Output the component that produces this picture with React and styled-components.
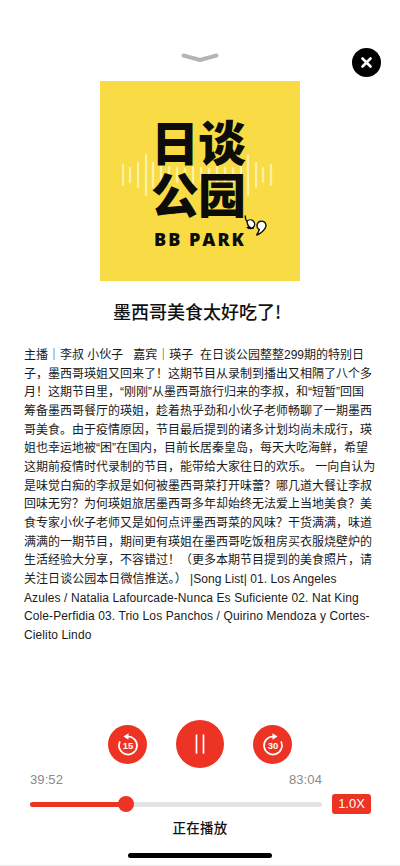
import React from "react";
import styled, { createGlobalStyle } from "styled-components";

const Global = createGlobalStyle`
  html, body { margin: 0; padding: 0; background: #fff; }
  body { font-family: "Liberation Sans", "Noto Sans CJK SC", sans-serif; }
`;

const Page = styled.div`
  width: 400px; height: 866px; display: flex; flex-direction: column; align-items: center;
  overflow: hidden; background: #fff; box-sizing: border-box; border-bottom: 1px solid #ececec;
`;
const Header = styled.header`
  width: 100%; height: 81px; display: grid; grid-template-columns: 1fr auto 1fr; box-sizing: border-box; padding: 0 19px;
`;
const Chevron = styled.svg`
  grid-column: 2; width: 38px; height: 12px; margin-top: 52px; display: block;
`;
const CloseButton = styled.button`
  grid-column: 3; justify-self: end; width: 29px; height: 29px; margin-top: 48px; border: 0; padding: 0; border-radius: 50%;
  background: #000; display: flex; align-items: center; justify-content: center;
`;
const Cover = styled.div`
  position: relative; width: 200px; height: 200px; flex: none; background: #f9dc45; display: flex; flex-direction: column; align-items: center;
`;
const Wave = styled.svg`
  position: absolute; left: 22px; top: 71px; width: 152px; height: 46px;
`;
const LogoMark = styled.div`
  position: relative; margin-top: 33px; font-family: "Noto Sans CJK SC", sans-serif; font-weight: 900; font-size: 48px; line-height: 52px; height: 104px;
  letter-spacing: -1px; color: #0c0c0a; white-space: pre-line; transform: translateX(-2px);
`;
const BrandRow = styled.div`
  position: relative; margin-top: 12px;
`;
const Brand = styled.div`
  font-family: "Open Sans", sans-serif; font-weight: 800; font-size: 18px; line-height: 18px; letter-spacing: 2px; color: #0c0c0a;
`;
const BpMark = styled.svg`
  position: absolute; left: 90px; top: -15px; width: 24px; height: 22px;
`;
const Title = styled.h1`
  margin: 18px 6px 0 0; font-family: "Noto Sans CJK SC", sans-serif; font-size: 18px; line-height: 24px; font-weight: 500; color: #111;
`;
const Description = styled.div`
  width: 352px; margin-top: 23px; font-size: 12px; line-height: 18.67px; color: #1a1a1a; white-space: pre;
  font-family: "Liberation Sans", "Noto Sans CJK SC", sans-serif;
`;
const Line = styled.div`
  height: 18.67px; letter-spacing: ${p => p.$tracking}px;
`;
const Player = styled.section`
  margin-top: auto; width: 100%; display: flex; flex-direction: column; align-items: center;
`;
const Controls = styled.div`
  display: flex; align-items: center; gap: 29px;
`;
const RoundButton = styled.button`
  width: ${p => p.$size}px; height: ${p => p.$size}px; border-radius: 50%; border: 0; padding: 0; background: #ec3324;
  display: flex; align-items: center; justify-content: center;
`;
const SkipIcon = styled.svg`
  width: 30px; height: 30px; display: block;
`;
const SkipLabel = styled.text`
  font-family: "Liberation Sans", sans-serif; font-weight: 700; font-size: 9.5px; fill: #fff; text-anchor: middle;
`;
const Times = styled.div`
  width: 292px; margin: 4px 48px 0 0; display: flex; justify-content: space-between; font-size: 13px; line-height: 16px; color: #8a8a8a; letter-spacing: 0.1px;
`;
const SliderRow = styled.div`
  width: 341px; margin: 6px 0 0 1px; display: flex; align-items: center; justify-content: space-between;
`;
const Track = styled.div`
  position: relative; width: 292px; height: 5px; border-radius: 3px; background: #e3e3e5;
`;
const Fill = styled.div`
  height: 100%; border-radius: 3px; background: #ec3324;
`;
const Thumb = styled.div`
  position: absolute; top: 50%; width: 16px; height: 16px; border-radius: 50%; background: #ec3324; transform: translate(-50%, -50%);
`;
const Speed = styled.div`
  width: 39px; height: 20px; border-radius: 3px; background: #ec3324; color: #fff; font-size: 13px; line-height: 20px; text-align: center;
`;
const Status = styled.div`
  margin-top: 3px; font-family: "Noto Sans CJK SC", sans-serif; font-size: 13.5px; line-height: 20px; font-weight: 500; color: #111; letter-spacing: 0.3px;
`;
const HomeBar = styled.div`
  width: 144px; height: 5px; border-radius: 3px; background: #000; margin: 16px 0 7px;
`;

const lines = [
  "主播｜李叔 小伙子   嘉宾｜瑛子  在日谈公园整整299期的特别日",
  "子，墨西哥瑛姐又回来了！这期节目从录制到播出又相隔了八个多",
  "月！这期节目里，“刚刚”从墨西哥旅行归来的李叔，和“短暂”回国",
  "筹备墨西哥餐厅的瑛姐，趁着热乎劲和小伙子老师畅聊了一期墨西",
  "哥美食。由于疫情原因，节目最后提到的诸多计划均尚未成行，瑛",
  "姐也幸运地被“困”在国内，目前长居秦皇岛，每天大吃海鲜，希望",
  "这期前疫情时代录制的节目，能带给大家往日的欢乐。 一向自认为",
  "是味觉白痴的李叔是如何被墨西哥菜打开味蕾？哪几道大餐让李叔",
  "回味无穷？为何瑛姐旅居墨西哥多年却始终无法爱上当地美食？美",
  "食专家小伙子老师又是如何点评墨西哥菜的风味？干货满满，味道",
  "满满的一期节目，期间更有瑛姐在墨西哥吃饭租房买衣服烧壁炉的",
  "生活经验大分享，不容错过！（更多本期节目提到的美食照片，请",
  "关注日谈公园本日微信推送。） |Song List| 01. Los Angeles",
  "Azules / Natalia Lafourcade-Nunca Es Suficiente 02. Nat King",
  "Cole-Perfidia 03. Trio Los Panchos / Quirino Mendoza y Cortes-",
  "Cielito Lindo",
];

const trackingFor = i => (i < 12 ? 0 : i === 12 ? 0.05 : 0.11);

const bars = [[1,10],[8,7],[16,12],[24,20],[31,12],[39,10],[47,8],[55,7],[63,6],[71,8],[79,7],[87,6],[95,8],[103,7],[111,7],[119,9],[126,20],[134,12],[141,7],[149,10]];

const Skip = ({ label, forward }) => (
  <RoundButton $size={39} aria-label={label}>
    <SkipIcon viewBox="0 0 30 30">
      <g transform={forward ? "matrix(-1 0 0 1 30 0)" : undefined}>
        <path d="M15 7.5a9 9 0 1 1-8.3 5.5" fill="none" stroke="#fff" strokeWidth="1.7" strokeLinecap="round" />
        <path d="M15.5 4.2v6.6l-5-3.3z" fill="#fff" />
      </g>
      <SkipLabel x="15" y="20">{label}</SkipLabel>
    </SkipIcon>
  </RoundButton>
);

export default function App() {
  const progress = 32.9;
  return (
    <Page>
      <Global />
      <Header>
        <Chevron viewBox="0 0 38 12">
          <path d="M2.5 3.5 L19 8 L35.5 3.5" fill="none" stroke="#b4b4b8" strokeWidth="4" strokeLinecap="round" strokeLinejoin="round" />
        </Chevron>
        <CloseButton aria-label="close">
          <svg width="11" height="11" viewBox="0 0 11 11">
            <path d="M1.5 1.5l8 8M9.5 1.5l-8 8" stroke="#fff" strokeWidth="2.6" strokeLinecap="round" />
          </svg>
        </CloseButton>
      </Header>
      <Cover>
        <Wave viewBox="0 0 152 46">
          {bars.map(([x, h], i) => (
            <line key={i} x1={x} x2={x} y1={23 - h} y2={23 + h} stroke="#fdf0a8" strokeWidth="2.2" strokeLinecap="round" />
          ))}
        </Wave>
        <LogoMark>{"日谈\n公园"}</LogoMark>
        <BrandRow>
          <Brand>BB PARK</Brand>
          <BpMark viewBox="0 0 24 22">
            <path d="M1.2 1C1.2 3.5 1.6 5 3 6.2a4.4 4.4 0 1 1 .2 6.3c2.2.6 4 .7 6 .7a6 6 0 0 1-6-6C2 5.5 1.2 3.5 1.2 1z" fill="#fff" stroke="#0c0c0a" strokeWidth="1.4" strokeLinejoin="round" />
            <path d="M15.4 14.6c-.8 2-1.6 3.8-2.7 5.4 2.7-1 6.6-3.8 8.3-6.6a4.5 4.5 0 1 0-5.6 1.2z" fill="#fff" stroke="#0c0c0a" strokeWidth="1.4" strokeLinejoin="round" />
          </BpMark>
        </BrandRow>
      </Cover>
      <Title>墨西哥美食太好吃了!</Title>
      <Description>
        {lines.map((l, i) => <Line key={i} $tracking={trackingFor(i)}>{l}</Line>)}
      </Description>
      <Player>
        <Controls>
          <Skip label="15" />
          <RoundButton $size={48} aria-label="pause">
            <svg width="12" height="20" viewBox="0 0 12 20">
              <path d="M2.5 1v18M9.5 1v18" stroke="#fff" strokeWidth="1.7" strokeLinecap="round" />
            </svg>
          </RoundButton>
          <Skip label="30" forward />
        </Controls>
        <Times><span>39:52</span><span>83:04</span></Times>
        <SliderRow>
          <Track>
            <Fill style={{ width: `${progress}%` }} />
            <Thumb style={{ left: `${progress}%` }} />
          </Track>
          <Speed>1.0X</Speed>
        </SliderRow>
        <Status>正在播放</Status>
        <HomeBar />
      </Player>
    </Page>
  );
}
